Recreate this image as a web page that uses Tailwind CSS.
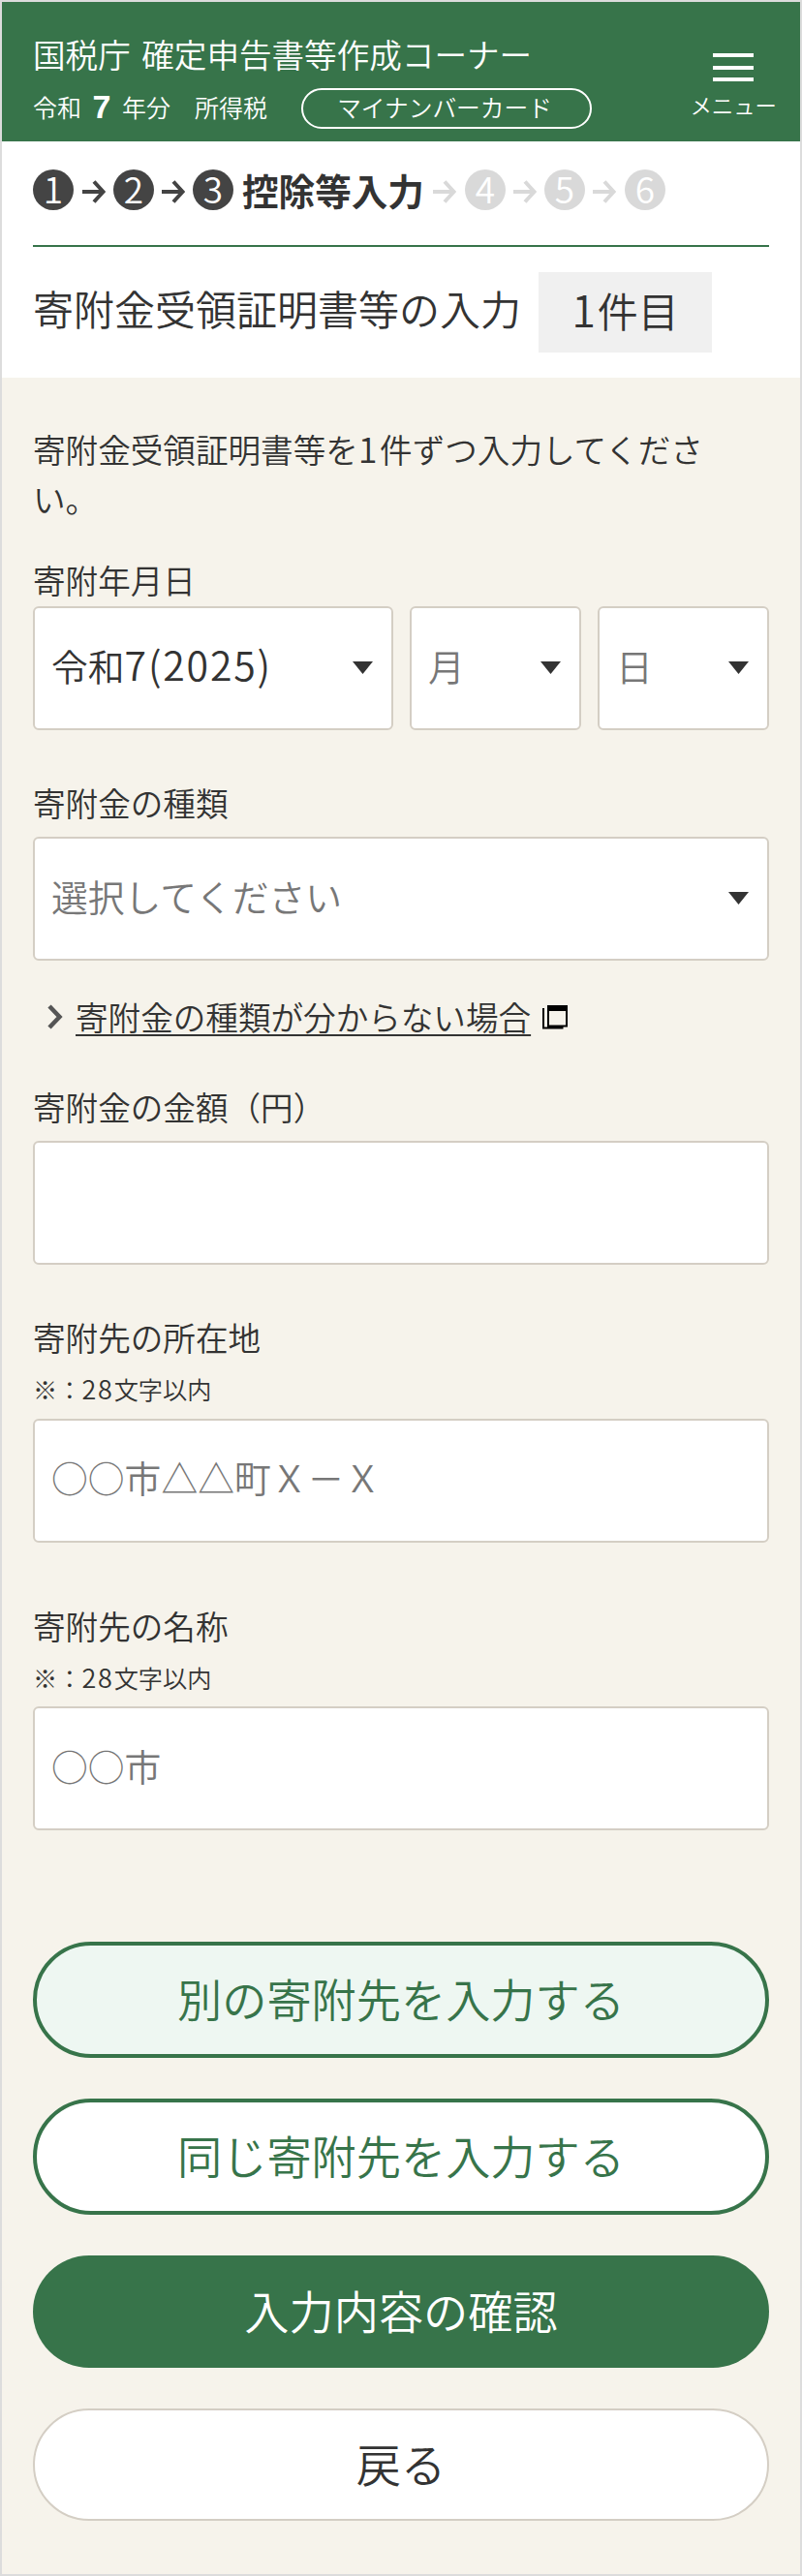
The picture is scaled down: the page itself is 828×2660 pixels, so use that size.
<!DOCTYPE html>
<html lang="ja">

<head>
   <meta charset="UTF-8">
   <meta name="viewport" content="width=device-width, initial-scale=1.0">
   <script src="https://cdn.jsdelivr.net/npm/@tailwindcss/browser@4"></script>
   <title>国税庁 確定申告書等作成コーナー</title>
</head>

<body class="font-['Noto_Sans_CJK_JP',sans-serif] font-[350] text-[#333] bg-[#f6f3eb]">

   <div class="w-[828px] h-[2660px] border-2 border-[#dcdcdc] overflow-hidden">

      <!-- header -->
      <header class="h-[143.5px] bg-[#37744a] text-white pl-8 pr-[24px] flex justify-between">
         <div class="pt-[34px]">
            <h1 class="text-[33.6px] leading-10 whitespace-nowrap [word-spacing:4px]">国税庁 確定申告書等作成コーナー</h1>
            <div class="flex items-center mt-[15px] h-[42px] text-[25px] leading-[38px] whitespace-nowrap">
               <span class="-mt-1">令和</span>
               <span class="w-[42px] -mt-1 text-center text-[34px] font-bold font-['Liberation_Sans',sans-serif]">7</span>
               <span class="-mt-1">年分　所得税</span>
               <span class="ml-[35px] w-[300px] h-[42px] border-2 border-white rounded-full text-center text-[24.7px] leading-[35px] pr-1">マイナンバーカード</span>
            </div>
         </div>
         <div class="flex flex-col items-center pt-[53px]">
            <div class="flex flex-col gap-[8.5px] w-[42px]">
               <span class="h-1 bg-white"></span>
               <span class="h-1 bg-white"></span>
               <span class="h-1 bg-white"></span>
            </div>
            <span class="text-[22.4px] leading-8 mt-2">メニュー</span>
         </div>
      </header>

      <!-- steps and page title -->
      <section class="h-[244px] bg-white px-8">
         <ol class="flex items-center pt-[29px] text-[#444] whitespace-nowrap">
            <li class="size-[42px] rounded-full bg-[#444] text-white text-[37px] leading-[39px] text-center">1</li>
            <li class="w-[41px] flex justify-center"><svg class="w-6 h-6 mt-1" viewBox="0 0 24 24" fill="none" stroke="currentColor" stroke-width="4"><path d="M0 12h21M12 1.500l9.500 10.500-9.500 10.500" /></svg></li>
            <li class="size-[42px] rounded-full bg-[#444] text-white text-[37px] leading-[39px] text-center">2</li>
            <li class="w-[40px] flex justify-center"><svg class="w-6 h-6 mt-1" viewBox="0 0 24 24" fill="none" stroke="currentColor" stroke-width="4"><path d="M0 12h21M12 1.500l9.500 10.500-9.500 10.500" /></svg></li>
            <li class="size-[42px] rounded-full bg-[#444] text-white text-[37px] leading-[39px] text-center">3</li>
            <li class="ml-[9px] text-[37.6px] leading-[42px] font-bold text-[#333]">控除等入力</li>
            <li class="w-[42px] flex justify-center text-[#d9d9d9]"><svg class="w-6 h-6 mt-1" viewBox="0 0 24 24" fill="none" stroke="currentColor" stroke-width="4"><path d="M0 12h21M12 1.500l9.500 10.500-9.500 10.500" /></svg></li>
            <li class="size-[42px] rounded-full bg-[#d9d9d9] text-white text-[37px] leading-[39px] text-center">4</li>
            <li class="w-[40px] flex justify-center text-[#d9d9d9]"><svg class="w-6 h-6 mt-1" viewBox="0 0 24 24" fill="none" stroke="currentColor" stroke-width="4"><path d="M0 12h21M12 1.500l9.500 10.500-9.500 10.500" /></svg></li>
            <li class="size-[42px] rounded-full bg-[#d9d9d9] text-white text-[37px] leading-[39px] text-center">5</li>
            <li class="w-[41px] flex justify-center text-[#d9d9d9]"><svg class="w-6 h-6 mt-1" viewBox="0 0 24 24" fill="none" stroke="currentColor" stroke-width="4"><path d="M0 12h21M12 1.500l9.500 10.500-9.500 10.500" /></svg></li>
            <li class="size-[42px] rounded-full bg-[#d9d9d9] text-white text-[37px] leading-[39px] text-center">6</li>
         </ol>
         <div class="mt-9 border-t-2 border-[#37744a]"></div>
         <div class="flex items-center mt-[26px] text-[42px] whitespace-nowrap">
            <h2 class="leading-[81px] h-[83px] -mt-2">寄附金受領証明書等の入力</h2>
            <span class="ml-[18px] w-[179px] h-[83px] leading-[75px] bg-[#f0f0f0] text-center"><span class="text-[45px] tracking-[2px]">1</span>件目</span>
         </div>
      </section>

      <!-- form -->
      <main class="px-8 pt-12">
         <p class="text-[33.6px] leading-[51px]">寄附金受領証明書等を<span class="text-[36px] leading-none tracking-[2.500px]">1</span>件ずつ入力してくださ<br>い。</p>

         <div class="mt-[34px] h-[50px] text-[33.6px] leading-[50px]">寄附年月日</div>
         <div class="flex gap-[17px] mt-[2px] text-[37.8px] leading-[120px]">
            <div class="w-[372px] h-32 bg-white border-2 border-[#d4cec4] rounded-md pl-[17px] pr-[19px] flex items-center justify-between">
               <span class="-mt-1.5">令和<span class="text-[41px] leading-none tracking-[1.800px]">7(2025)</span></span>
               <svg class="w-[21px] h-[13px]" viewBox="0 0 21 13" fill="#333"><path d="M0 0h21L10.500 13z" /></svg>
            </div>
            <div class="w-[177px] h-32 bg-white border-2 border-[#d4cec4] rounded-md pl-[17px] pr-[19px] flex items-center justify-between">
               <span class="text-[#777] -mt-1.5">月</span>
               <svg class="w-[21px] h-[13px]" viewBox="0 0 21 13" fill="#333"><path d="M0 0h21L10.500 13z" /></svg>
            </div>
            <div class="w-[177px] h-32 bg-white border-2 border-[#d4cec4] rounded-md pl-[17px] pr-[19px] flex items-center justify-between">
               <span class="text-[#777] -mt-1.5">日</span>
               <svg class="w-[21px] h-[13px]" viewBox="0 0 21 13" fill="#333"><path d="M0 0h21L10.500 13z" /></svg>
            </div>
         </div>

         <div class="mt-[50px] h-[50px] text-[33.6px] leading-[50px]">寄附金の種類</div>
         <div class="mt-[10px] h-32 bg-white border-2 border-[#d4cec4] rounded-md pl-[17px] pr-[19px] flex items-center justify-between text-[37.8px] leading-[120px]">
            <span class="text-[#777] -mt-1.5">選択してください</span>
            <svg class="w-[21px] h-[13px]" viewBox="0 0 21 13" fill="#333"><path d="M0 0h21L10.500 13z" /></svg>
         </div>
         <div class="flex items-center mt-[33px] pl-[15px] h-[50px] text-[33.6px] leading-[48px]">
            <svg class="w-4 h-[26px]" viewBox="0 0 16 26" fill="none" stroke="#555" stroke-width="4.500"><path d="M2 2l10.500 11L2 24" /></svg>
            <a href="#" class="ml-[13px] underline decoration-2 underline-offset-[4px]">寄附金の種類が分からない場合</a>
            <svg class="ml-[12px] w-[26px] h-[26px]" viewBox="0 0 26 26" fill="none" stroke="#000" stroke-width="2"><path d="M1 4v20.500h20.500M6 2h19v20.500H6z" /><path d="M6 1h19v6H6z" fill="#000" stroke="none" /></svg>
         </div>

         <div class="mt-[43px] h-[50px] text-[33.6px] leading-[50px]">寄附金の金額（円）</div>
         <div class="mt-[10px] h-32 bg-white border-2 border-[#d4cec4] rounded-md"></div>

         <div class="mt-[50px] h-[50px] text-[33.6px] leading-[50px]">寄附先の所在地</div>
         <div class="mt-[9px] h-[38px] text-[25.2px] leading-[38px]">※：<span class="text-[27px] leading-none tracking-[1.800px]">28</span>文字以内</div>
         <div class="mt-[12px] h-32 bg-white border-2 border-[#d4cec4] rounded-md pl-[17px] text-[37.8px] leading-[116px] text-[#777]">○○市△△町Ｘ－Ｘ</div>

         <div class="mt-[61px] h-[50px] text-[33.6px] leading-[50px]">寄附先の名称</div>
         <div class="mt-[9px] h-[38px] text-[25.2px] leading-[38px]">※：<span class="text-[27px] leading-none tracking-[1.800px]">28</span>文字以内</div>
         <div class="mt-[11px] h-32 bg-white border-2 border-[#d4cec4] rounded-md pl-[17px] text-[37.8px] leading-[117px] text-[#777]">○○市</div>

         <!-- buttons -->
         <div class="flex flex-col gap-[42px] mt-[115px] text-[46.2px] text-center">
            <button class="h-[120px] rounded-full border-4 border-[#37744a] bg-[#eef7f2] text-[#37744a] leading-[106px] pb-1">別の寄附先を入力する</button>
            <button class="h-[120px] rounded-full border-4 border-[#37744a] bg-white text-[#37744a] leading-[106px] pb-1">同じ寄附先を入力する</button>
            <button class="h-[116px] rounded-full bg-[#37744a] text-white leading-[110px] pb-1">入力内容の確認</button>
            <button class="h-[116px] rounded-full border-2 border-[#d4cec4] bg-white leading-[106px] pb-1">戻る</button>
         </div>
      </main>
   </div>
</body>

</html>
